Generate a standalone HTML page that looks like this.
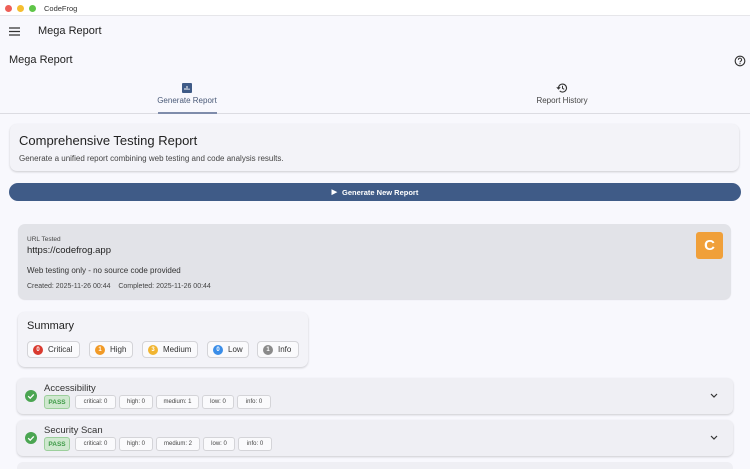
<!DOCTYPE html>
<html><head><meta charset="utf-8"><style>
*{box-sizing:border-box;margin:0;padding:0}
html,body{width:750px;height:469px;overflow:hidden}
body{background:#f8f8fd;font-family:"Liberation Sans",sans-serif;color:#222;position:relative}
.a{position:absolute}
.tb{left:0;top:0;width:750px;height:16px;background:#fff;border-bottom:1px solid #e6e6ea}
.dot{width:7px;height:7px;border-radius:50%;top:5px}
.card{background:#f3f3f8;border-radius:7px;box-shadow:0 1px 2px rgba(0,0,0,.18)}
.chip{top:341px;height:17px;border:1px solid #d4d4d8;border-radius:4px;background:#fafafc;font-size:8px;color:#333;display:flex;align-items:center;padding-left:5px;gap:5px}
.n{width:10px;height:10px;border-radius:50%;color:#fff;font-size:6px;font-weight:bold;display:flex;align-items:center;justify-content:center}
.row{left:17px;width:716px;height:36px;background:#efeff4;border-radius:6px;box-shadow:0 1px 2px rgba(0,0,0,.18)}
.sc{height:14px;border:1px solid #d4d4d8;border-radius:3px;background:#fafafc;font-size:6px;color:#444;display:flex;align-items:center;justify-content:center;top:17px}
.pass{background:#cfe8cf;border-color:#9ccf9c;color:#3e9a47;font-weight:bold;font-size:6.5px}
</style></head><body>
<div class="a tb"></div>
<div class="a dot" style="left:5px;background:#ee5f57"></div>
<div class="a dot" style="left:17px;background:#f5be30"></div>
<div class="a dot" style="left:29px;background:#5fc548"></div>
<div class="a" style="left:44px;top:4px;font-size:7.5px;color:#333">CodeFrog</div>
<svg class="a" style="left:9px;top:27px" width="11" height="9"><path d="M0 1h11M0 4.5h11M0 8h11" stroke="#333" stroke-width="1.2"/></svg>
<div class="a" style="left:38px;top:25px;font-size:11px">Mega Report</div>
<div class="a" style="left:9px;top:54px;font-size:11px">Mega Report</div>
<svg class="a" style="left:734px;top:55px" width="12" height="12"><circle cx="6" cy="6" r="4.8" fill="none" stroke="#333" stroke-width="1.1"/><path d="M4.4 4.8a1.6 1.6 0 1 1 2.4 1.3c-.6.4-.8.6-.8 1.3" fill="none" stroke="#333" stroke-width="1"/><circle cx="6" cy="8.7" r=".6" fill="#333"/></svg>
<svg class="a" style="left:182px;top:83px" width="10" height="10"><rect width="10" height="10" rx="1" fill="#3f5b87"/><path d="M3 7V5M5 7V3M7 7V5.5" stroke="#fff" stroke-width="1"/></svg>
<div class="a" style="left:127px;width:120px;text-align:center;top:96px;font-size:8px;color:#4a5a78">Generate Report</div>
<div class="a" style="left:0;top:113px;width:750px;height:1px;background:#dcdce2"></div>
<div class="a" style="left:158px;top:112px;width:59px;height:2px;background:#7f8cab"></div>
<svg class="a" style="left:556px;top:82px" width="12" height="12"><path d="M2.5 6a4 4 0 1 1 1.2 2.9" fill="none" stroke="#333" stroke-width="1.1"/><path d="M0.8 5.2l1.7 1.8 1.7-1.8" fill="none" stroke="#333" stroke-width="1"/><path d="M6.5 3.8V6.3l1.7 1" fill="none" stroke="#333" stroke-width="1"/></svg>
<div class="a" style="left:502px;width:120px;text-align:center;top:96px;font-size:8px;color:#444">Report History</div>

<div class="a card" style="left:10px;top:124px;width:729px;height:47px"></div>
<div class="a" style="left:19px;top:133px;font-size:13px">Comprehensive Testing Report</div>
<div class="a" style="left:19px;top:154px;font-size:8px;color:#444">Generate a unified report combining web testing and code analysis results.</div>

<div class="a" style="left:9px;top:183px;width:732px;height:18px;background:#3f5b87;border-radius:9px;color:#fff;font-size:7.5px;font-weight:bold;display:flex;align-items:center;justify-content:center"><span style="font-size:7px;margin-right:5px">▶</span>Generate New Report</div>

<div class="a" style="left:18px;top:224px;width:713px;height:75px;background:#e2e3e8;border-radius:7px;box-shadow:0 1px 1px rgba(0,0,0,.1)"></div>
<div class="a" style="left:27px;top:236px;font-size:6.5px;color:#444">URL Tested</div>
<div class="a" style="left:27px;top:245px;font-size:9.5px;color:#222">https://codefrog.app</div>
<div class="a" style="left:27px;top:266px;font-size:8px;color:#333">Web testing only - no source code provided</div>
<div class="a" style="left:27px;top:283px;font-size:7px;color:#444">Created: 2025-11-26 00:44 &nbsp;&nbsp; Completed: 2025-11-26 00:44</div>
<div class="a" style="left:696px;top:232px;width:27px;height:27px;background:#f0a03a;border-radius:3px;color:#fff;font-weight:bold;font-size:15px;display:flex;align-items:center;justify-content:center">C</div>

<div class="a card" style="left:18px;top:312px;width:290px;height:55px"></div>
<div class="a" style="left:27px;top:320px;font-size:11px">Summary</div>
<div class="a chip" style="left:27px;width:53px"><span class="n" style="background:#d93a2f">0</span>Critical</div>
<div class="a chip" style="left:89px;width:44px"><span class="n" style="background:#f19a26">1</span>High</div>
<div class="a chip" style="left:142px;width:56px"><span class="n" style="background:#f1b531">3</span>Medium</div>
<div class="a chip" style="left:207px;width:42px"><span class="n" style="background:#3a8de8">0</span>Low</div>
<div class="a chip" style="left:257px;width:42px"><span class="n" style="background:#8a8a8a">1</span>Info</div>

<div class="a row" style="top:378px">
<svg class="a" style="left:8px;top:12px" width="12" height="12"><circle cx="6" cy="6" r="6" fill="#4ba552"/><path d="M3.2 6.2l2 2 3.6-3.8" fill="none" stroke="#fff" stroke-width="1.3"/></svg>
<div class="a" style="left:27px;top:5px;font-size:9.5px;color:#333">Accessibility</div>
<div class="a sc pass" style="left:27px;width:26px">PASS</div>
<div class="a sc" style="left:58px;width:41px">critical: 0</div>
<div class="a sc" style="left:102px;width:34px">high: 0</div>
<div class="a sc" style="left:139px;width:43px">medium: 1</div>
<div class="a sc" style="left:185px;width:32px">low: 0</div>
<div class="a sc" style="left:220px;width:34px">info: 0</div>
<svg class="a" style="left:693px;top:15px" width="8" height="6"><path d="M1 1l3 3 3-3" fill="none" stroke="#333" stroke-width="1.2"/></svg>
</div>
<div class="a row" style="top:420px">
<svg class="a" style="left:8px;top:12px" width="12" height="12"><circle cx="6" cy="6" r="6" fill="#4ba552"/><path d="M3.2 6.2l2 2 3.6-3.8" fill="none" stroke="#fff" stroke-width="1.3"/></svg>
<div class="a" style="left:27px;top:5px;font-size:9.5px;color:#333">Security Scan</div>
<div class="a sc pass" style="left:27px;width:26px">PASS</div>
<div class="a sc" style="left:58px;width:41px">critical: 0</div>
<div class="a sc" style="left:102px;width:34px">high: 0</div>
<div class="a sc" style="left:139px;width:44px">medium: 2</div>
<div class="a sc" style="left:186px;width:32px">low: 0</div>
<div class="a sc" style="left:221px;width:34px">info: 0</div>
<svg class="a" style="left:693px;top:15px" width="8" height="6"><path d="M1 1l3 3 3-3" fill="none" stroke="#333" stroke-width="1.2"/></svg>
</div>
<div class="a" style="left:17px;top:462px;width:716px;height:7px;background:#efeff4;border-radius:6px 6px 0 0"></div>
</body></html>
